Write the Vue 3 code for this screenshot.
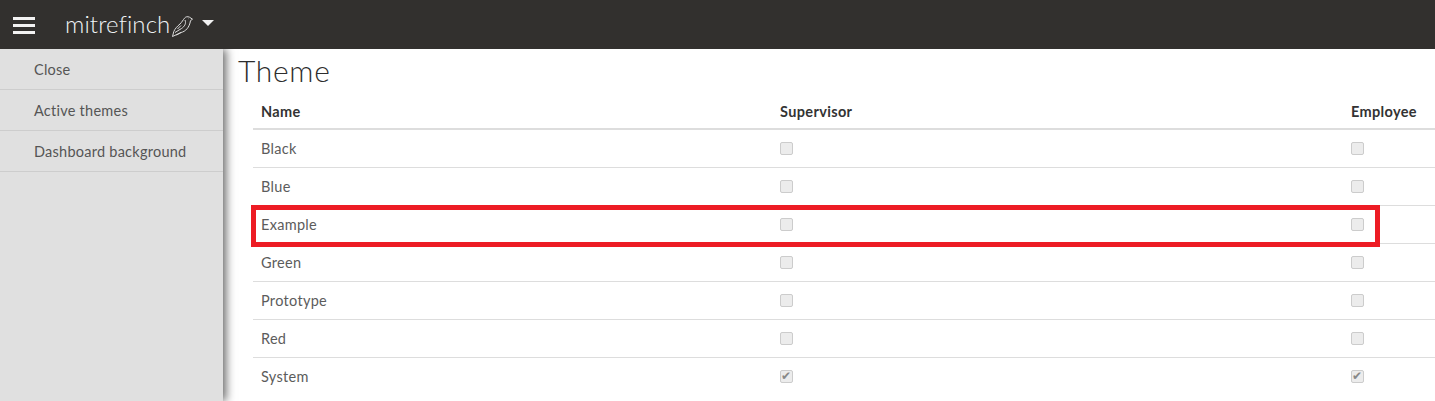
<template>
  <div class="page">
    <header class="topbar">
      <button class="menu-btn" aria-label="Menu">
        <span></span><span></span><span></span>
      </button>
      <div class="brand">
        <span class="brand-name">mitrefinch</span>
        <svg class="bird" viewBox="0 0 21 21" width="21" height="21" fill="none" stroke="#dcdcdc" stroke-width="1" stroke-linejoin="round">
          <path d="M20.5 3.2 L17.5 1.2 C15.5 0.2 13.5 0.8 12.5 2.2 C11 4 10 6 8 8 C5 10.5 2.8 13 1.8 15.5 L0.5 20.5 L9 16.5 C13.5 15.5 17.5 11.5 18.5 4.6 Z" />
          <path d="M13 4 C14.5 7.5 12.5 10.5 9.5 12.5 L3 16.5" />
          <path d="M9 16.5 L4.5 19 M9 9.5 L5.5 13 M16.6 2.8 L16.9 3" />
        </svg>
        <span class="caret"></span>
      </div>
    </header>
    <div class="body">
      <nav class="sidebar">
        <a v-for="item in menu" :key="item" class="side-item">{{ item }}</a>
      </nav>
      <main class="content">
        <h1>Theme</h1>
        <div class="table-wrap">
          <table>
            <thead>
              <tr>
                <th class="col-name">Name</th>
                <th class="col-sup">Supervisor</th>
                <th>Employee</th>
              </tr>
            </thead>
            <tbody>
              <tr v-for="t in themes" :key="t.name">
                <td>{{ t.name }}</td>
                <td><input type="checkbox" disabled :checked="t.on" /></td>
                <td><input type="checkbox" disabled :checked="t.on" /></td>
              </tr>
            </tbody>
          </table>
          <div class="highlight"></div>
        </div>
      </main>
    </div>
  </div>
</template>

<script setup>
const menu = ['Close', 'Active themes', 'Dashboard background']

const themes = [
  { name: 'Black', on: false },
  { name: 'Blue', on: false },
  { name: 'Example', on: false },
  { name: 'Green', on: false },
  { name: 'Prototype', on: false },
  { name: 'Red', on: false },
  { name: 'System', on: true }
]
</script>

<style>
html, body {
  margin: 0;
  overflow: hidden;
}
</style>

<style scoped>
.page {
  width: 1435px;
  height: 401px;
  overflow: hidden;
  background: #fff;
  font-family: Lato, "Open Sans", sans-serif;
  font-size: 14px;
  color: #333;
  display: flex;
  flex-direction: column;
}

.topbar {
  height: 49px;
  flex: none;
  background: #32302e;
  display: flex;
  align-items: center;
  position: relative;
  z-index: 2;
}

.menu-btn {
  width: 49px;
  height: 49px;
  padding: 1px 14px 0 13px;
  border: 0;
  background: none;
  display: flex;
  flex-direction: column;
  justify-content: center;
  gap: 4px;
}

.menu-btn span {
  display: block;
  height: 3px;
  background: #f2f2f2;
}

.brand {
  margin-left: 16px;
  display: flex;
  align-items: center;
}

.brand-name {
  font-size: 24px;
  font-weight: 300;
  color: #f0f4f6;
  letter-spacing: 0.1px;
  margin-bottom: 3px;
}

.bird {
  margin-left: 2px;
  margin-top: 3px;
}

.caret {
  margin-left: 9px;
  margin-bottom: 4px;
  border-left: 6.5px solid transparent;
  border-right: 6.5px solid transparent;
  border-top: 6px solid #f2f2f2;
}

.body {
  flex: 1;
  display: flex;
  min-height: 0;
}

.sidebar {
  width: 223px;
  flex: none;
  background: #e0e0e0;
  box-shadow: 3px 0 9px rgba(0, 0, 0, 0.6);
  position: relative;
}

.side-item {
  display: block;
  height: 40px;
  line-height: 41px;
  padding-left: 34px;
  border-bottom: 1px solid #cdcdcd;
  color: #555;
  font-size: 14.5px;
  letter-spacing: 0.25px;
}

.content {
  flex: 1;
  min-width: 0;
  padding-left: 15px;
}

h1 {
  margin: 0;
  height: 52px;
  line-height: 43px;
  font-size: 30px;
  font-weight: 300;
  color: #2d2d2d;
  letter-spacing: 0.7px;
}

.table-wrap {
  position: relative;
  margin-left: 15px;
}

table {
  width: 1182px;
  border-collapse: collapse;
  table-layout: fixed;
}

.col-name {
  width: 503px;
}

.col-sup {
  width: 555px;
}

th {
  height: 21px;
  padding: 0 8px 6px;
  text-align: left;
  font-weight: 700;
  font-size: 14.5px;
  letter-spacing: 0.35px;
  border-bottom: 2px solid #ddd;
}

td {
  height: 37px;
  padding: 0 8px;
  border-bottom: 1px solid #ddd;
  color: #5c5c5c;
  font-size: 14.5px;
  letter-spacing: 0.3px;
}

tbody tr:last-child td {
  border-bottom: 0;
}

input[type="checkbox"] {
  appearance: none;
  display: block;
  box-sizing: border-box;
  width: 13px;
  height: 13px;
  margin: -1px 0 0;
  background: #ececec;
  border: 1px solid #ccc;
  border-radius: 2px;
  position: relative;
}

input[type="checkbox"]:checked::after {
  content: "✔";
  position: absolute;
  left: 0;
  top: -1px;
  font: 12px/12px "DejaVu Sans", sans-serif;
  color: #888;
}

.highlight {
  position: absolute;
  left: -2px;
  top: 104px;
  width: 1129px;
  height: 42px;
  box-sizing: border-box;
  border: 5px solid #ed1c24;
}
</style>
